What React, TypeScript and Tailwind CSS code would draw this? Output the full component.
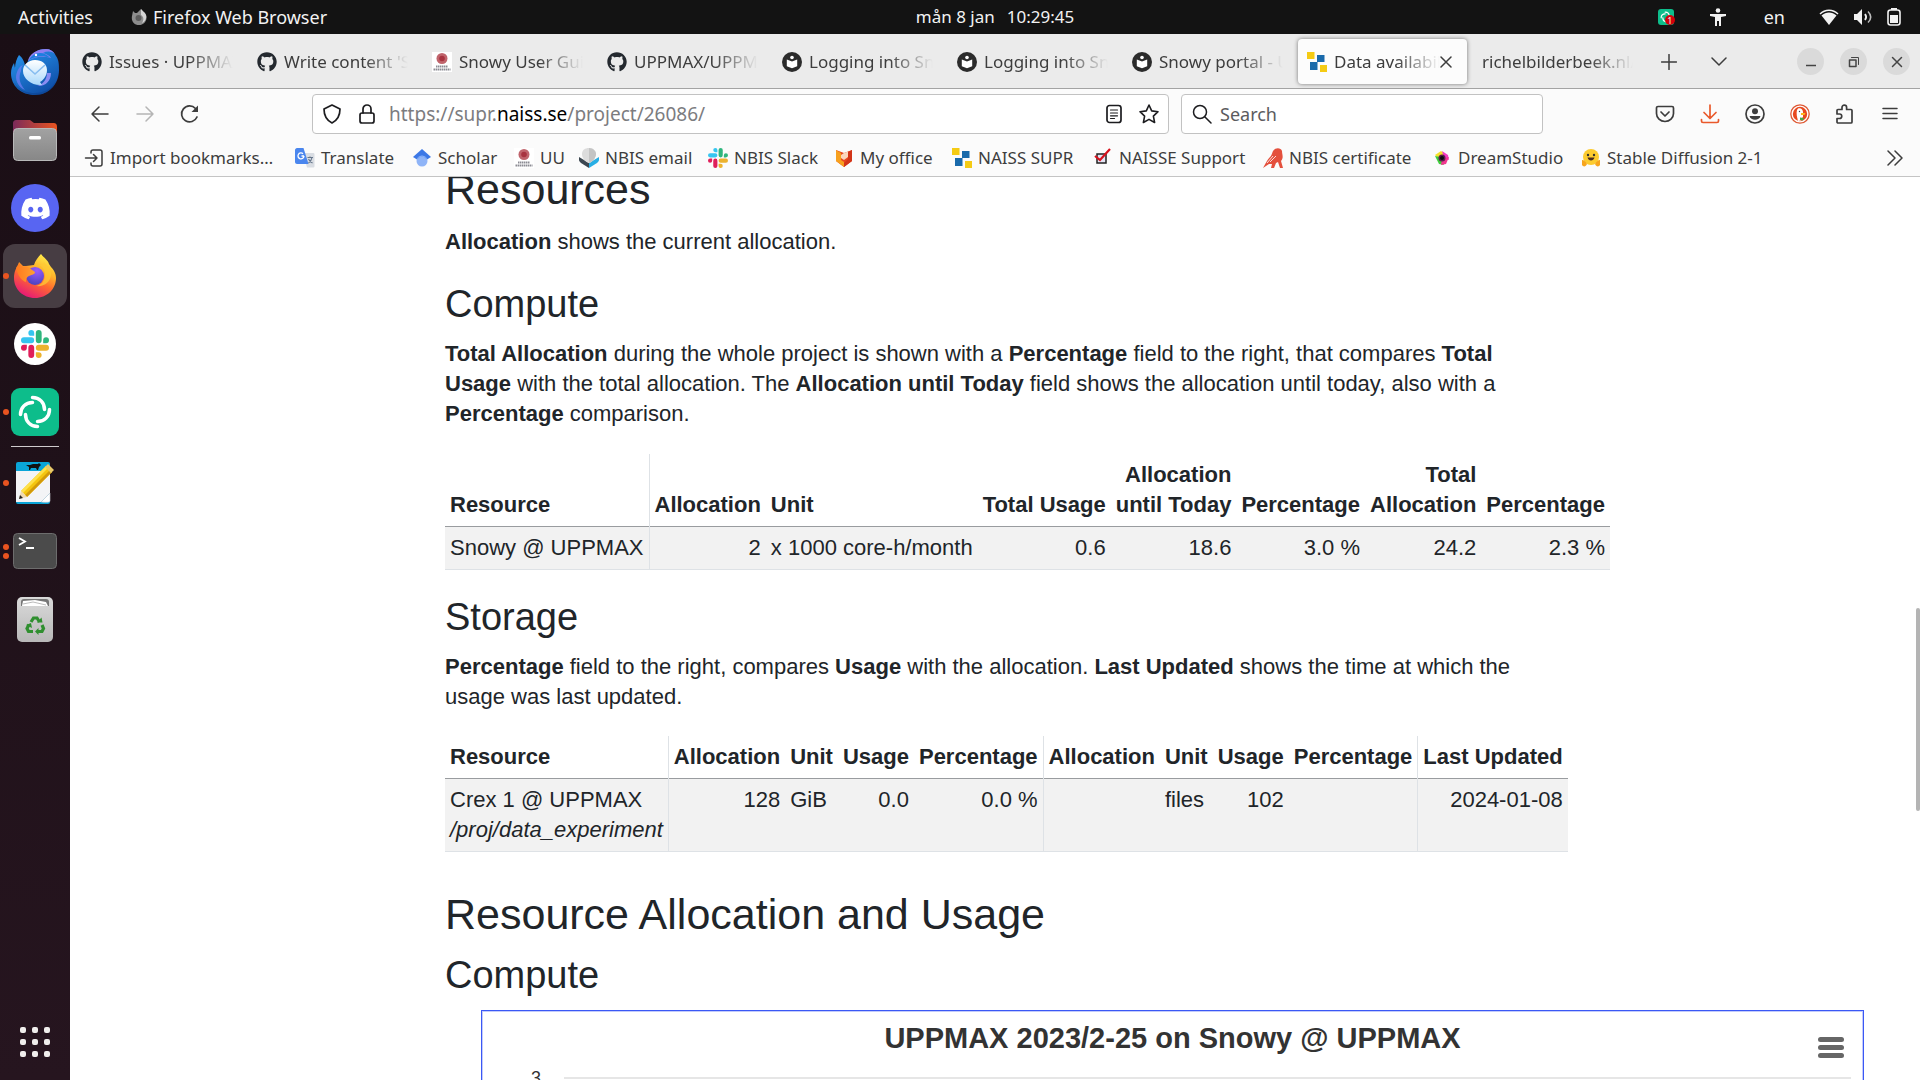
import type { ReactNode } from "react";
import { FaDiscord, FaGithub } from "react-icons/fa";

const ui = "font-['Noto_Sans',sans-serif]";
const line = { fill: "none", stroke: "currentColor", strokeWidth: 1.5, strokeLinecap: "round", strokeLinejoin: "round" } as const;

/* ---------- application logos ---------- */

function Thunderbird() {
  return (
    <svg viewBox="0 0 48 48" className="size-12" aria-hidden="true">
      <defs>
        <linearGradient id="tb1" x1="0" y1="0" x2="0.6" y2="1">
          <stop offset="0" stopColor="#2a9af3" />
          <stop offset="1" stopColor="#0f4fa8" />
        </linearGradient>
        <linearGradient id="tb2" x1="0" y1="0" x2="0" y2="1">
          <stop offset="0" stopColor="#fff" />
          <stop offset="1" stopColor="#a9d8fb" />
        </linearGradient>
      </defs>
      <path d="M8 7c4 3 6 8 6 12l4-8C21 4 28 1 35 1c5 0 8 3 10 7 3 4 3 9 3 14 0 14-10 25-24 25C10 47 0 38 0 25c0-3 1-7 3-10l1 5c0-5 2-10 4-13z" fill="url(#tb1)" />
      <path d="M17 13c1-6 8-12 18-12 4 0 7 2 9 5-4-3-8-3-12-1 4 1 7 3 8 5-8-2-16-2-23 3z" fill="#8f7ff0" />
      <path d="M18 12c6-4 14-5 21-2-2-3-6-5-10-5-5 0-9 3-11 7z" fill="#1c7fe0" />
      <path d="M6 24c-3 7 1 15 8 18-5-6-7-12-4-19 0-3 1-5 2-6-3 1-5 4-6 7z" fill="#6a7cf0" opacity=".8" />
      <path d="M36 25c0 7-5 12-10 13 8 1 14-5 14-13z" fill="#8a8cf2" />
      <path d="M24 12c7 0 12 4 12 10 0 7-5 11-7 12l2 3c-10 1-19-6-19-14 0-6 5-11 12-11z" fill="url(#tb2)" />
      <path d="M14 17l10 9 10-9" fill="none" stroke="#87bdf0" strokeWidth="1.6" />
      <circle cx="25" cy="7" r="1.2" fill="#fff" />
      <path d="M3 34c5 9 14 11 21 11 9 0 17-4 21-12-3 9-12 14-21 14S6 42 3 34z" fill="#0b3f8c" opacity=".5" />
    </svg>
  );
}

function Files() {
  return (
    <svg viewBox="0 0 44 41" className="h-[41px] w-11" aria-hidden="true">
      <defs>
        <linearGradient id="fl1" x1="0" x2="1"><stop offset="0" stopColor="#7b2a5a" /><stop offset="1" stopColor="#e95420" /></linearGradient>
        <linearGradient id="fl2" x1="0" y1="0" x2="0" y2="1"><stop offset="0" stopColor="#a2a2a2" /><stop offset="1" stopColor="#878787" /></linearGradient>
      </defs>
      <path d="M0 4c0-3 1-4 4-4h13l4 3h19c3 0 4 1 4 4v10H0z" fill="url(#fl1)" />
      <rect x=".5" y="8.500" width="43" height="32" rx="4" fill="url(#fl2)" stroke="#b9b9b9" />
      <rect x="16" y="16" width="12" height="3.500" rx="1.500" fill="#fff" />
    </svg>
  );
}

function Firefox() {
  return (
    <svg viewBox="0 0 42 44" className="h-11 w-[42px]" aria-hidden="true">
      <defs>
        <linearGradient id="ff1" x1="0.8" y1="0" x2="0.3" y2="1">
          <stop offset="0" stopColor="#fff44f" /><stop offset=".35" stopColor="#ffb52a" /><stop offset=".6" stopColor="#ff6a2f" /><stop offset="1" stopColor="#e6157a" />
        </linearGradient>
        <radialGradient id="ff2" cx=".6" cy=".2" r=".9"><stop offset="0" stopColor="#9b5cff" /><stop offset="1" stopColor="#4340b8" /></radialGradient>
        <linearGradient id="ff3" x1="0" y1="0" x2="1" y2="0"><stop offset="0" stopColor="#ff7a1f" /><stop offset="1" stopColor="#ffa030" /></linearGradient>
      </defs>
      <path d="M27 0c3 4 7 6 8 10l2 3c4 4 5 8 5 11 0 11-9 20-21 20S0 35 0 24c0-6 2-10 4-12l1-4 4 4h3l8-1c1-4 4-8 7-11z" fill="url(#ff1)" />
      <circle cx="21" cy="22" r="9" fill="url(#ff2)" />
      <path d="M2 14l3-5 4 4c2-1 4-1 5 0l7 5c0 3-5 3-6 4-3 1-3 5-3 6-4-1-8-6-10-14z" fill="url(#ff3)" />
      <path d="M21 11c5-1 10 3 10 10 0 6-4 10-9 11 8 1 15-4 15-12 0-6-4-8-7-12-1 4-5 3-9 3z" fill="#ffc935" opacity=".75" />
    </svg>
  );
}

function SlackMark({ className }: { className: string }) {
  return (
    <svg viewBox="0 0 24 24" className={className} aria-hidden="true">
      <path fill="#36c5f0" d="M8.800 0a2.500 2.500 0 0 0 0 5h2.500V2.500A2.500 2.500 0 0 0 8.800 0zM2.500 6.300a2.500 2.500 0 0 0 0 5h6.300a2.500 2.500 0 0 0 0-5z" />
      <path fill="#2eb67d" d="M24 8.800a2.500 2.500 0 0 0-5 0v2.500h2.500A2.500 2.500 0 0 0 24 8.800zM17.700 2.500a2.500 2.500 0 0 0-5 0v6.300a2.500 2.500 0 0 0 5 0z" />
      <path fill="#ecb22e" d="M15.200 24a2.500 2.500 0 0 0 0-5h-2.500v2.500a2.500 2.500 0 0 0 2.500 2.500zM21.500 17.700a2.500 2.500 0 0 0 0-5h-6.300a2.500 2.500 0 0 0 0 5z" />
      <path fill="#e01e5a" d="M0 15.200a2.500 2.500 0 0 0 5 0v-2.500H2.500A2.500 2.500 0 0 0 0 15.200zM6.300 21.500a2.500 2.500 0 0 0 5 0v-6.300a2.500 2.500 0 0 0-5 0z" />
    </svg>
  );
}

function ElementMark({ className }: { className: string }) {
  return (
    <svg viewBox="0 0 48 48" className={className} fill="none" stroke="#fff" strokeWidth="3.500" strokeLinecap="round" aria-hidden="true">
      <rect width="48" height="48" rx="9" fill="#0dbd8b" stroke="none" />
      <path d="M21.500 9.500c7 0 12 5 12 12" />
      <path d="M38.500 21.500c0 7-5 12-12 12" />
      <path d="M26.500 38.500c-7 0-12-5-12-12" />
      <path d="M9.500 26.500c0-7 5-12 12-12" />
    </svg>
  );
}

function Notes() {
  return (
    <svg viewBox="0 0 40 42" className="h-[42px] w-10" aria-hidden="true">
      <rect x="1" width="34" height="42" rx="2" fill="#0aa5d8" />
      <path d="M1 9h34v22l-9 9H1z" fill="#f3f4f6" />
      <path d="M35 31l-9 9c2 0 9 1 9-1z" fill="#fff" stroke="#c7cbd1" strokeWidth=".6" />
      <path d="M11 3l4 0 3-1 5 0 1-1 2 2-2 2-1 3h-1l-1-2-5 0-1 2h-1v-3z" fill="#111" />
      <path d="M31 4l6 6-25 25-6-6z" fill="#f4c610" />
      <path d="M31 4l2 2L8 31l-2-2z" fill="#ffe14a" />
      <path d="M35 8l2 2-25 25-2-2z" fill="#d39a0a" />
      <path d="M33 2l6 6-3 3-6-6z" fill="#e8c96a" />
      <path d="M6 29l6 6-8 2z" fill="#f0d9b0" />
      <path d="M5 33l3 3-4 1z" fill="#222" />
    </svg>
  );
}

function Terminal() {
  return (
    <svg viewBox="0 0 44 36" className="h-9 w-11" aria-hidden="true">
      <rect x=".5" y=".5" width="43" height="35" rx="4" fill="#4b4b4b" stroke="#6d6d6d" />
      <path d="M6 5l6 3.500L6 12M13 15h8" fill="none" stroke="#fff" strokeWidth="1.800" />
    </svg>
  );
}

function Trash() {
  return (
    <svg viewBox="0 0 36 45" className="h-[45px] w-9" aria-hidden="true">
      <defs><linearGradient id="tr" x1="0" y1="0" x2="0" y2="1"><stop offset="0" stopColor="#dadada" /><stop offset="1" stopColor="#b8b8b8" /></linearGradient></defs>
      <rect width="36" height="45" rx="5" fill="url(#tr)" />
      <path d="M4 9V5c0-2 1-3 3-3h22c2 0 3 1 3 3v4z" fill="#777" />
      <path d="M5 9l1-5 12-1 11 2 2 4z" fill="#fff" />
      <path d="M6 7l10-2 13 3" fill="none" stroke="#aaa" strokeWidth=".8" />
      <g fill="none" stroke="#2f8f2f" strokeWidth="3.200">
        <path d="M14 25l2.500-4h3.500l2.500 4" />
        <path d="M25 28l1.500 3.500-1.500 3h-4" />
        <path d="M16 34.500h-4.500l-1.500-3 2-4" />
      </g>
      <path d="M20 25.500h5.500l-1-5zM21.500 31v7l-3.500-3.500zM9 28l5-2 1 5z" fill="#2f8f2f" />
    </svg>
  );
}

/* ---------- site icons ---------- */

const Github = () => <FaGithub className="size-5 text-[#24292f]" aria-hidden="true" />;

const Docs = () => (
  <svg viewBox="0 0 20 20" className="size-5" aria-hidden="true">
    <circle cx="10" cy="10" r="10" fill="#2b2b2b" />
    <circle cx="10" cy="5.500" r="1.800" fill="#fff" />
    <path d="M4.800 7.500L10 9.500l5.200-2v6.800L10 16.200l-5.200-1.900z" fill="#fff" />
  </svg>
);

const Uppsala = () => (
  <svg viewBox="0 0 20 20" className="size-5" aria-hidden="true">
    <rect width="20" height="20" fill="#fff" />
    <circle cx="10" cy="6.500" r="5.500" fill="#c0646c" />
    <circle cx="10" cy="6.500" r="2.800" fill="#a83340" />
    <path d="M4 14.500h12M1.500 17.500h17" stroke="#8b8b93" strokeWidth="1.800" strokeDasharray="1.500 .5" />
  </svg>
);

const Supr = () => (
  <svg viewBox="0 0 20 20" className="size-5" aria-hidden="true">
    <path d="M0 0h7.500v7H0zM13 13h7v7h-7z" fill="#f5cb14" />
    <path d="M10 3h7.500v7H10zM3 10h7.500v8H3z" fill="#1a6aab" />
  </svg>
);

const Import = () => (
  <svg viewBox="0 0 20 20" className="size-5" {...line} aria-hidden="true">
    <path d="M7 5V4a2 2 0 0 1 2-2h7a2 2 0 0 1 2 2v12a2 2 0 0 1-2 2H9a2 2 0 0 1-2-2v-1M1.500 10H13M9.500 6.500L13 10l-3.500 3.500" />
  </svg>
);

const Translate = () => (
  <svg viewBox="0 0 20 20" className="size-5" aria-hidden="true">
    <path d="M8 5h10c1 0 1.500.5 1.500 1.500V18c0 1-.5 1.500-1.500 1.500h-6z" fill="#d9dde3" />
    <path d="M2 0h6.500l5 16H2C1 16 0 15 0 14V2C0 1 1 0 2 0z" fill="#4a86ee" />
    <path d="M9 8H6.500M9 8a3 3 0 1 1-1-2.300" fill="none" stroke="#fff" strokeWidth="1.300" />
    <path d="M12.500 9.500H18M15 8.500v1M17 9.500c-.5 3-2 4.500-3.500 5.500M13.500 11c1 2 2 3 4 4" fill="none" stroke="#65758a" strokeWidth="1.100" />
  </svg>
);

const Scholar = () => (
  <svg viewBox="0 0 20 20" className="size-5" aria-hidden="true">
    <path d="M10 1L1 9l4 2.500h10L19 9z" fill="#3c78e6" />
    <circle cx="10" cy="13" r="5.500" fill="#8fb4f7" />
    <path d="M5 11.500a5.500 5.500 0 0 1 10 0L10 7z" fill="#5a91f0" />
  </svg>
);

const Email = () => (
  <svg viewBox="0 0 20 20" className="size-5" aria-hidden="true">
    <path d="M0 9l10 6v5L2 15c-1-1-2-2-2-3z" fill="#3b4650" />
    <path d="M20 9l-10 6v5l8-5c1-1 2-2 2-3z" fill="#28aee4" />
    <path d="M10 0c4 0 7 3 7 6s-3 8-7 9c-4-1-7-5-7-9s3-6 7-6z" fill="#dcdcdc" />
    <path d="M10 0c4 0 7 3 7 6s-3 8-7 9z" fill="#c4c4c4" />
  </svg>
);

const Office = () => (
  <svg viewBox="0 0 20 20" className="size-5" aria-hidden="true">
    <path d="M2 2l8 3 8-3v11l-8 6-8-6z" fill="#e8461e" />
    <path d="M2 2l5 3v7l3 2v5l-8-6z" fill="#f7a01e" />
    <path d="M10 5l4-1.500V9l-4 3-3-2V7z" fill="#fbd6bd" />
    <path d="M14 4l4-2v11l-8 6v-4l4-4z" fill="#d23418" />
  </svg>
);

const Tick = () => (
  <svg viewBox="0 0 20 20" className="size-5" aria-hidden="true">
    <path d="M4 6h9v9H4z" fill="#e4e4f4" stroke="#222" strokeWidth="1.500" />
    <path d="M2 8l5 4L17 1" fill="none" stroke="#d8121d" strokeWidth="2.200" />
  </svg>
);

const Bird = () => (
  <svg viewBox="0 0 20 20" className="size-5" aria-hidden="true">
    <path d="M19 3c-1-3-6-4-9 0-1 2-1 4-3 6-3 3-4 6-7 11l6-4h3l-1 4h3l2-5 2-1 2 6h3l-2-7c3-4 1-6 1-10z" fill="#e4503d" />
    <path d="M4 15l6-7M7 14l6-6" stroke="#fff" strokeWidth=".8" />
  </svg>
);

const Dream = () => (
  <svg viewBox="0 0 20 20" className="size-5" aria-hidden="true">
    <path d="M3 7l6-4 4 3-6 5z" fill="#f6e02a" />
    <path d="M10 3l6 4 1 5-5-2z" fill="#f23bc0" />
    <path d="M3 8l4 8 5 1-4-8z" fill="#3ecb3b" />
    <path d="M17 9l-3 7-5 1 1-6z" fill="#f0358f" />
    <circle cx="10" cy="10" r="3.500" fill="#5a1c4c" />
    <circle cx="10" cy="10" r="2" fill="#0c0c0c" />
  </svg>
);

const Hug = () => (
  <svg viewBox="0 0 20 20" className="size-5" aria-hidden="true">
    <circle cx="10" cy="9" r="8" fill="#fccb2f" />
    <path d="M1 12c2 0 4 2 5 4-1 3-4 3-5 1zM19 12c-2 0-4 2-5 4 1 3 4 3 5 1z" fill="#f7a51d" />
    <path d="M6.500 9.500c1 4 6 4 7 0z" fill="#4a2c1e" />
    <circle cx="7" cy="7" r="1.200" fill="#333" />
    <circle cx="13" cy="7" r="1.200" fill="#333" />
  </svg>
);

/* ---------- desktop ---------- */

function TopBar() {
  return (
    <header className={`${ui} grid h-[34px] shrink-0 grid-cols-[1fr_auto_1fr] items-center bg-[#131313] text-[18px] text-[#f2f2f2]`}>
      <div className="flex items-center">
        <button className="ml-[18px] w-[113px] text-left">Activities</button>
        <button className="flex items-center gap-[6px]">
          <svg viewBox="0 0 16 16" className="size-4" aria-hidden="true">
            <path d="M10 0c1 2 4 3 5 6 2 5-2 10-7 10S0 12 1 7l1-5 2 2h2z" fill="#8d8d8d" />
            <path d="M10 0c1 2 4 3 5 6 1 3-1 7-4 8 2-3 2-6-1-8z" fill="#d5d5d5" />
            <circle cx="7.500" cy="9" r="3" fill="#5c5c5c" />
          </svg>
          Firefox Web Browser
        </button>
      </div>
      <button className="ml-[70px] flex gap-3 whitespace-nowrap text-[17px]">
        <span>mån 8 jan</span>
        <span>10:29:45</span>
      </button>
      <div className="flex items-center justify-end pr-[19px]">
        <button aria-label="Element, 1 unread" className="relative mr-9">
          <ElementMark className="size-4" />
          <span className="absolute -right-px top-1.5 flex size-[10px] items-center justify-center rounded-full bg-[#d4000a] text-[9px] leading-none">1</span>
        </button>
        <button aria-label="Accessibility" className="mr-[38px]">
          <svg viewBox="0 0 16 18" className="h-[18px] w-4" fill="#f2f2f2" aria-hidden="true">
            <circle cx="8" cy="2.500" r="2.300" />
            <path d="M0 6h16v2l-5 1v9H9v-5H7v5H5V9L0 8z" />
          </svg>
        </button>
        <button className="mr-[34px]">en</button>
        <button aria-label="System menu" className="flex items-center gap-[14px]">
          <svg viewBox="0 0 20 16" className="h-4 w-5" aria-hidden="true">
            <path d="M1 5c5-5 13-5 18 0" fill="none" stroke="#f2f2f2" strokeWidth="1.500" />
            <path d="M2.500 6.500C7 2.500 13 2.500 17.500 6.500L10 16z" fill="#f2f2f2" />
          </svg>
          <svg viewBox="0 0 20 16" className="h-4 w-5" aria-hidden="true">
            <path d="M1 5h3l5-5v16l-5-5H1z" fill="#f2f2f2" />
            <path d="M12 5c1.500 2 1.500 4 0 6" fill="none" stroke="#f2f2f2" strokeWidth="1.800" />
            <path d="M15 2.500c3.500 3.500 3.500 7.500 0 11" fill="none" stroke="#bdbdbd" strokeWidth="1.500" />
          </svg>
          <svg viewBox="0 0 14 18" className="h-[18px] w-[14px]" aria-hidden="true">
            <path d="M4 0h6v2H4z" fill="#f2f2f2" />
            <rect x="1" y="2" width="12" height="15" rx="2.500" fill="none" stroke="#f2f2f2" strokeWidth="1.600" />
            <rect x="3" y="7" width="8" height="8" fill="#f2f2f2" />
          </svg>
        </button>
      </div>
    </header>
  );
}

function DockItem({ label, dots = 0, active = false, children }: { label: string; dots?: number; active?: boolean; children: ReactNode }) {
  return (
    <button aria-label={label} className="flex h-[68px] items-center pl-[3px]">
      <span className={`relative flex size-16 items-center justify-center rounded-xl ${active ? "bg-[#473d43]" : ""}`}>
        {dots > 0 && (
          <span className="absolute inset-y-0 left-0 flex flex-col justify-center gap-[3px]">
            {Array.from({ length: dots }, (_, i) => (
              <span key={i} className="size-1.5 rounded-full bg-[#e95420]" />
            ))}
          </span>
        )}
        {children}
      </span>
    </button>
  );
}

function Dock() {
  return (
    <nav aria-label="Dock" className="flex w-[70px] shrink-0 flex-col bg-linear-to-b from-[#1a0e15] to-[#26151f] pt-1">
      <DockItem label="Thunderbird"><Thunderbird /></DockItem>
      <DockItem label="Files"><Files /></DockItem>
      <DockItem label="Discord">
        <span className="flex size-12 items-center justify-center rounded-full bg-[#5865f2]">
          <FaDiscord className="size-[31px] text-white" aria-hidden="true" />
        </span>
      </DockItem>
      <DockItem label="Firefox" dots={1} active><Firefox /></DockItem>
      <DockItem label="Slack">
        <span className="flex size-[42px] items-center justify-center rounded-full bg-white">
          <SlackMark className="size-7" />
        </span>
      </DockItem>
      <DockItem label="Element" dots={1}><ElementMark className="size-12" /></DockItem>
      <div className="mx-[11px] h-[3px] shrink-0 border-t border-[#cfcbcd]" />
      <DockItem label="Notes" dots={1}><Notes /></DockItem>
      <DockItem label="Terminal" dots={2}><Terminal /></DockItem>
      <DockItem label="Trash"><Trash /></DockItem>
      <button aria-label="Show applications" className="mx-auto mb-[23px] mt-auto grid grid-cols-3 gap-1.5">
        {Array.from({ length: 9 }, (_, i) => (
          <span key={i} className="size-1.5 rounded-xs bg-[#f0eeec]" />
        ))}
      </button>
    </nav>
  );
}

/* ---------- browser ---------- */

const tabs: { title: string; icon?: ReactNode; active?: boolean }[] = [
  { title: "Issues · UPPMAX/UPPMAX", icon: <Github /> },
  { title: "Write content 'Snowy'", icon: <Github /> },
  { title: "Snowy User Guide", icon: <Uppsala /> },
  { title: "UPPMAX/UPPMAX", icon: <Github /> },
  { title: "Logging into Snowy", icon: <Docs /> },
  { title: "Logging into Snowy", icon: <Docs /> },
  { title: "Snowy portal - UPPMAX", icon: <Docs /> },
  { title: "Data availability", icon: <Supr />, active: true },
  { title: "richelbilderbeek.nl/", icon: undefined },
];

const windowButton = "flex size-[27px] items-center justify-center rounded-full bg-[#dadada]";

function TabBar() {
  return (
    <div className="flex h-[55px] shrink-0 items-center border-b border-[#a3a3a3] bg-[#ebebeb] pt-px">
      <div role="tablist" className="flex">
        {tabs.map((t, i) => (
          <div key={i} className="w-[175px] px-[3px]">
            <div className={`flex h-[45px] items-center rounded px-[9px] ${t.active ? "bg-[#fcfcfc] shadow-[0_0_4px_rgba(0,0,0,0.5)]" : ""}`}>
              <button role="tab" aria-selected={!!t.active} className="flex min-w-0 flex-1 items-center gap-[7px]">
                {t.icon && <span className="shrink-0">{t.icon}</span>}
                <span className="min-w-0 flex-1 overflow-hidden whitespace-nowrap text-left [mask-image:linear-gradient(to_left,transparent,black_44px)]">{t.title}</span>
              </button>
              {t.active && (
                <button aria-label="Close tab" className="mr-1.5">
                  <svg viewBox="0 0 12 12" className="size-3" {...line} aria-hidden="true"><path d="M1 1l10 10M11 1L1 11" /></svg>
                </button>
              )}
            </div>
          </div>
        ))}
      </div>
      <button aria-label="New tab" className="ml-4">
        <svg viewBox="0 0 16 16" className="size-4" {...line} aria-hidden="true"><path d="M8 .5v15M.5 8h15" /></svg>
      </button>
      <button aria-label="List all tabs" className="ml-[34px]">
        <svg viewBox="0 0 16 16" className="size-4" {...line} aria-hidden="true"><path d="M1 4l7 7 7-7" /></svg>
      </button>
      <div className="ml-auto mr-[10px] flex gap-4 text-[#444]">
        <button aria-label="Minimise" className={windowButton}>
          <svg viewBox="0 0 12 12" className="size-3" {...line} strokeLinecap="butt" aria-hidden="true"><path d="M1 9.500h10" /></svg>
        </button>
        <button aria-label="Restore" className={windowButton}>
          <svg viewBox="0 0 12 12" className="size-3" {...line} aria-hidden="true"><path d="M1.500 4h6.500v6.500H1.500z" /><path d="M3.500 1.500h7v7" strokeWidth="1" /></svg>
        </button>
        <button aria-label="Close" className={windowButton}>
          <svg viewBox="0 0 12 12" className="size-3" {...line} aria-hidden="true"><path d="M1.500 1.500l9 9M10.500 1.500l-9 9" /></svg>
        </button>
      </div>
    </div>
  );
}

const navButton = "flex w-[45px] items-center justify-center";
const glyph = "size-5";

function NavBar() {
  return (
    <div className="flex h-[50px] shrink-0 items-center px-[7px]">
      <button aria-label="Back" className={navButton}>
        <svg viewBox="0 0 20 20" className={glyph} {...line} aria-hidden="true"><path d="M18 10H2M9 3l-7 7 7 7" /></svg>
      </button>
      <button aria-label="Forward" disabled className={`${navButton} text-[#b5b5b5]`}>
        <svg viewBox="0 0 20 20" className={glyph} {...line} aria-hidden="true"><path d="M2 10h16M11 3l7 7-7 7" /></svg>
      </button>
      <button aria-label="Reload" className={navButton}>
        <svg viewBox="0 0 20 20" className={glyph} {...line} aria-hidden="true"><path d="M17 13a8 8 0 1 1-1.500-8.500" strokeWidth="1.700" /><path d="M18 1.500V8h-6.500z" fill="currentColor" stroke="none" /></svg>
      </button>
      <div className="ml-[100px] flex h-10 min-w-0 flex-1 items-center rounded border border-[#c2c2c2] bg-white text-[#1c1c1f]">
        <button aria-label="Tracking protection" className="ml-[9px]">
          <svg viewBox="0 0 20 20" className={glyph} {...line} aria-hidden="true"><path d="M10 1l8 4c0 6-2 11-8 14C4 16 2 11 2 5z" strokeWidth="1.700" /></svg>
        </button>
        <button aria-label="Site information" className="ml-[15px] mr-3">
          <svg viewBox="0 0 20 20" className={glyph} {...line} strokeWidth={1.7} aria-hidden="true"><rect x="3" y="9" width="14" height="10" rx="2" /><path d="M6 9V5a4 4 0 0 1 8 0v4" /></svg>
        </button>
        <div className="relative min-w-0 flex-1">
          <div aria-hidden="true" className="pointer-events-none absolute inset-0 flex items-center whitespace-nowrap text-[19px] text-[#7c7c7f]">
            https://supr.<span className="text-black">naiss.se</span>/project/26086/
          </div>
          <input aria-label="Address" className="h-9 w-full bg-transparent outline-none" />
        </div>
        <button aria-label="Reader view" className="mr-[15px]">
          <svg viewBox="0 0 20 20" className={glyph} {...line} aria-hidden="true"><rect x="3" y="1.500" width="14" height="17" rx="2.500" strokeWidth="1.700" /><path d="M6.500 6h7M6.500 9h7M6.500 11.800h7M6.500 14.500h4" strokeWidth="1.200" /></svg>
        </button>
        <button aria-label="Bookmark this page" className="mr-[9px]">
          <svg viewBox="0 0 20 20" className={glyph} {...line} aria-hidden="true"><path d="M10 1l2.700 5.900 6.300.8-4.600 4.400 1.200 6.400L10 15.400l-5.600 3.100 1.200-6.400L1 7.700l6.300-.8z" strokeWidth="1.600" /></svg>
        </button>
      </div>
      <label className="ml-3 flex h-10 w-[362px] items-center gap-2 rounded border border-[#c2c2c2] bg-white pl-[10px] text-[#1c1c1f]">
        <svg viewBox="0 0 20 20" className={glyph} {...line} aria-hidden="true"><circle cx="8" cy="8" r="6.500" /><path d="M13 13l6 6" /></svg>
        <input aria-label="Search" placeholder="Search" className="min-w-0 flex-1 bg-transparent text-[18px] outline-none placeholder:text-[#5b5b5e]" />
      </label>
      <div className="ml-[99px] mr-px flex">
        <button aria-label="Pocket" className={navButton}>
          <svg viewBox="0 0 20 20" className={glyph} {...line} aria-hidden="true"><path d="M3 2.500h14a1.500 1.500 0 0 1 1.500 1.500v5.500a8.500 8 0 0 1-17 0V4A1.500 1.500 0 0 1 3 2.500zM6 8l4 4 4-4" strokeWidth="1.700" /></svg>
        </button>
        <button aria-label="Downloads" className={`${navButton} text-[#e9592b]`}>
          <svg viewBox="0 0 20 20" className={glyph} {...line} aria-hidden="true"><path d="M10 1v13M4 8.500l6 6 6-6M1.500 15.500v1.500a1.500 1.500 0 0 0 1.500 1.500h14a1.500 1.500 0 0 0 1.500-1.500v-1.500" strokeWidth="1.700" /></svg>
        </button>
        <button aria-label="Account" className={navButton}>
          <svg viewBox="0 0 20 20" className={glyph} aria-hidden="true"><circle cx="10" cy="10" r="9" fill="none" stroke="currentColor" strokeWidth="1.700" /><circle cx="10" cy="7.200" r="3" fill="currentColor" /><path d="M4.500 12h11c-1 5-10 5-11 0z" fill="currentColor" /></svg>
        </button>
        <button aria-label="DuckDuckGo" className={navButton}>
          <svg viewBox="0 0 20 20" className={glyph} aria-hidden="true">
            <circle cx="10" cy="10" r="9.200" fill="#fff" stroke="#de5833" strokeWidth="1.300" />
            <circle cx="10" cy="10" r="7.200" fill="#e8491f" />
            <path d="M8 4.500c3-1 5 1 5 4v4l-2 4-3 .5c-1-4-2-8-1-11z" fill="#fff" />
            <path d="M11 9h4.500l-1 2H11z" fill="#fbb81c" />
            <path d="M10 13.500l4 .5-1 2.500-3-.5z" fill="#4aa94a" />
            <circle cx="9.500" cy="7.500" r=".7" fill="#345" />
          </svg>
        </button>
        <button aria-label="Extensions" className={navButton}>
          <svg viewBox="0 0 20 20" className={glyph} {...line} aria-hidden="true"><path d="M7 5.500V3.500a2.300 2.300 0 0 1 4.600 0v2h4.400a1 1 0 0 1 1 1V18a1 1 0 0 1-1 1H3a1 1 0 0 1-1-1v-3.500h2.500a2.200 2.200 0 0 0 0-4.500H2V6.500a1 1 0 0 1 1-1z" strokeWidth="1.700" /></svg>
        </button>
        <button aria-label="Menu" className={navButton}>
          <svg viewBox="0 0 20 20" className={glyph} {...line} aria-hidden="true"><path d="M3 4.500h14M3 9.500h14M3 14.500h14" /></svg>
        </button>
      </div>
    </div>
  );
}

const bookmarks: { title: string; icon: ReactNode; width: string }[] = [
  { title: "Import bookmarks…", icon: <Import />, width: "w-[211px]" },
  { title: "Translate", icon: <Translate />, width: "w-[117px]" },
  { title: "Scholar", icon: <Scholar />, width: "w-[102px]" },
  { title: "UU", icon: <Uppsala />, width: "w-[65px]" },
  { title: "NBIS email", icon: <Email />, width: "w-[129px]" },
  { title: "NBIS Slack", icon: <SlackMark className="size-5" />, width: "w-[126px]" },
  { title: "My office", icon: <Office />, width: "w-[118px]" },
  { title: "NAISS SUPR", icon: <Supr />, width: "w-[141px]" },
  { title: "NAISSE Support", icon: <Tick />, width: "w-[170px]" },
  { title: "NBIS certificate", icon: <Bird />, width: "w-[169px]" },
  { title: "DreamStudio", icon: <Dream />, width: "w-[149px]" },
  { title: "Stable Diffusion 2-1", icon: <Hug />, width: "w-[200px]" },
];

function BookmarksBar() {
  return (
    <div className="flex h-[38px] shrink-0 items-center border-b border-[#c4c4c4] pl-[14px] pr-[17px]">
      {bookmarks.map((b) => (
        <a key={b.title} href="#" className={`flex items-center gap-1.5 whitespace-nowrap ${b.width}`}>
          <span className="shrink-0">{b.icon}</span>
          {b.title}
        </a>
      ))}
      <button aria-label="More bookmarks" className="ml-auto">
        <svg viewBox="0 0 16 16" className="size-4" {...line} aria-hidden="true"><path d="M1 1l7 7-7 7M8 1l7 7-7 7" /></svg>
      </button>
    </div>
  );
}

/* ---------- page ---------- */

const h2 = "mb-3 text-[43px] leading-[52px]";
const h3 = "mb-3 text-[38px] leading-[46px]";
const para = "mb-6 max-w-[1090px]";
const cell = "px-[5px] py-1.5";
const right = `${cell} text-right`;
const divider = "border-r border-[#dee2e6]";

function ComputeTable() {
  return (
    <table className="mb-6 mt-[25px] border-collapse whitespace-nowrap">
      <thead className="border-b border-[#999c9f] align-bottom">
        <tr>
          <th className={`${cell} ${divider} text-left`}>Resource</th>
          <th className={right}>Allocation</th>
          <th className={`${cell} text-left`}>Unit</th>
          <th className={`${right} w-[129px]`}>Total Usage</th>
          <th className={right}>Allocation<br />until Today</th>
          <th className={right}>Percentage</th>
          <th className={right}>Total<br />Allocation</th>
          <th className={right}>Percentage</th>
        </tr>
      </thead>
      <tbody>
        <tr className="border-b border-[#dee2e6] bg-[#f2f2f2]">
          <td className={`${cell} ${divider}`}>Snowy @ UPPMAX</td>
          <td className={right}>2</td>
          <td className={cell}>x 1000 core-h/month</td>
          <td className={right}>0.6</td>
          <td className={right}>18.6</td>
          <td className={right}>3.0 %</td>
          <td className={right}>24.2</td>
          <td className={right}>2.3 %</td>
        </tr>
      </tbody>
    </table>
  );
}

function StorageTable() {
  return (
    <table className="border-collapse whitespace-nowrap">
      <thead className="border-b border-[#999c9f] align-bottom">
        <tr>
          <th className={`${cell} ${divider} text-left`}>Resource</th>
          <th className={right}>Allocation</th>
          <th className={`${cell} text-left`}>Unit</th>
          <th className={right}>Usage</th>
          <th className={`${right} ${divider}`}>Percentage</th>
          <th className={right}>Allocation</th>
          <th className={`${cell} text-left`}>Unit</th>
          <th className={right}>Usage</th>
          <th className={`${right} ${divider}`}>Percentage</th>
          <th className={right}>Last Updated</th>
        </tr>
      </thead>
      <tbody>
        <tr className="border-b border-[#dee2e6] bg-[#f2f2f2] align-top">
          <td className={`${cell} ${divider}`}>Crex 1 @ UPPMAX<br /><i>/proj/data_experiment</i></td>
          <td className={right}>128</td>
          <td className={cell}>GiB</td>
          <td className={right}>0.0</td>
          <td className={`${right} ${divider}`}>0.0 %</td>
          <td className={right}></td>
          <td className={cell}>files</td>
          <td className={right}>102</td>
          <td className={`${right} ${divider}`}></td>
          <td className={right}>2024-01-08</td>
        </tr>
      </tbody>
    </table>
  );
}

function UsageChart() {
  return (
    <section className="ml-9 h-[400px] border border-[#3b58f5] pt-2.5 text-[#333] shadow-[inset_0_0_0_1px_#c3cbfb]">
      <div className="relative">
        <h4 className="text-center text-[29px] font-bold leading-[34px]">UPPMAX 2023/2-25 on Snowy @ UPPMAX</h4>
        <button aria-label="Chart menu" className="absolute right-[19px] top-4 flex w-[26px] flex-col gap-[3px]">
          <span className="h-[5px] rounded-sm bg-[#666]" />
          <span className="h-[5px] rounded-sm bg-[#666]" />
          <span className="h-[5px] rounded-sm bg-[#666]" />
        </button>
      </div>
      <div className="mt-3 flex items-center pr-3 text-[18px] leading-[22px]">
        <span className="w-[82px] pr-[23px] text-right">3</span>
        <span className="h-0.5 flex-1 bg-[#e6e6e6]" />
      </div>
    </section>
  );
}

function Page() {
  return (
    <main className="relative min-h-0 flex-1 overflow-hidden bg-white pl-[375px] pr-14 font-['Liberation_Sans',sans-serif] text-[22px] leading-[30px] text-[#212529]">
      <h2 className={`-mt-[14px] ${h2}`}>Resources</h2>
      <p className={para}><b>Allocation</b> shows the current allocation.</p>
      <h3 className={h3}>Compute</h3>
      <p className={para}>
        <b>Total Allocation</b> during the whole project is shown with a <b>Percentage</b> field to the right, that compares <b>Total Usage</b> with the total allocation. The <b>Allocation until Today</b> field shows the allocation until today, also with a <b>Percentage</b> comparison.
      </p>
      <ComputeTable />
      <h3 className={h3}>Storage</h3>
      <p className={para}>
        <b>Percentage</b> field to the right, compares <b>Usage</b> with the allocation. <b>Last Updated</b> shows the time at which the usage was last updated.
      </p>
      <StorageTable />
      <h2 className={`mt-9 ${h2}`}>Resource Allocation and Usage</h2>
      <h3 className={h3}>Compute</h3>
      <UsageChart />
      <div className="absolute right-0 top-[431px] h-[203px] w-1 rounded-full bg-[#b4b4b4]" />
    </main>
  );
}

export default function App() {
  return (
    <div className="flex h-screen flex-col overflow-hidden">
      <TopBar />
      <div className="flex min-h-0 flex-1">
        <Dock />
        <div className="flex min-w-0 flex-1 flex-col bg-[#fbfbfb]">
          <div className={`${ui} flex flex-col text-[17px] text-[#3d3d3d]`}>
            <TabBar />
            <NavBar />
            <BookmarksBar />
          </div>
          <Page />
        </div>
      </div>
    </div>
  );
}
